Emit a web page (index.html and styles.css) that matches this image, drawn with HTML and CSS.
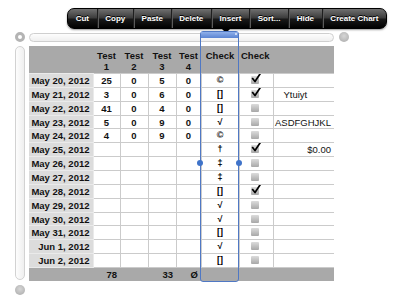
FILE: index.html
```html
<!DOCTYPE html>
<html lang="en">
<head>
    <meta charset="UTF-8">
    <title>Spreadsheet Selection</title>
    <link rel="stylesheet" href="styles.css">
</head>
<body>

<div class="screen">
    <!-- Horizontal scroller -->
    <div class="hscroll">
        <span class="knob ring"></span>
        <span class="htrack"></span>
        <span class="knob"></span>
    </div>

    <div class="main">
        <div class="vside">
            <span class="vtrack"></span>
            <span class="knob"></span>
        </div>

        <table class="grid">
            <colgroup>
                <col style="width:64px">
                <col style="width:27px">
                <col style="width:28px">
                <col style="width:28px">
                <col style="width:25px">
                <col style="width:38px">
                <col style="width:34px">
                <col style="width:61px">
            </colgroup>
            <thead>
                <tr>
                    <th></th>
                    <th>Test<br>1</th>
                    <th>Test<br>2</th>
                    <th>Test<br>3</th>
                    <th>Test<br>4</th>
                    <th>Check</th>
                    <th class="left">Check</th>
                    <th></th>
                </tr>
            </thead>
            <tbody id="rows"></tbody>
            <tfoot>
                <tr>
                    <td></td>
                    <td>78</td>
                    <td></td>
                    <td>33</td>
                    <td>&Oslash;</td>
                    <td></td>
                    <td></td>
                    <td></td>
                </tr>
            </tfoot>
        </table>
    </div>

    <!-- Edit menu over the selected column -->
    <div class="menu">
        <span>Cut</span>
        <span>Copy</span>
        <span>Paste</span>
        <span>Delete</span>
        <span>Insert</span>
        <span>Sort...</span>
        <span>Hide</span>
        <span>Create Chart</span>
    </div>
    <div class="menu-arrow"></div>

    <div class="selection">
        <div class="sel-head"><i></i></div>
        <span class="handle l"></span>
        <span class="handle r"></span>
    </div>
</div>

<script>
    const copy = '\u00a9\ufe0e';
    const data = [
        ['May 20, 2012', '25', '0', '5', '0', copy, true, ''],
        ['May 21, 2012', '3', '0', '6', '0', '[]', true, 'Ytuiyt'],
        ['May 22, 2012', '41', '0', '4', '0', '[]', false, ''],
        ['May 23, 2012', '5', '0', '9', '0', '\u221a', false, 'ASDFGHJKL'],
        ['May 24, 2012', '4', '0', '9', '0', copy, false, ''],
        ['May 25, 2012', '', '', '', '', '\u2020', true, '$0.00'],
        ['May 26, 2012', '', '', '', '', '\u2021', false, ''],
        ['May 27, 2012', '', '', '', '', '\u2021', false, ''],
        ['May 28, 2012', '', '', '', '', '[]', true, ''],
        ['May 29, 2012', '', '', '', '', '\u221a', false, ''],
        ['May 30, 2012', '', '', '', '', '\u221a', false, ''],
        ['May 31, 2012', '', '', '', '', '[]', false, ''],
        ['Jun 1, 2012', '', '', '', '', '\u221a', false, ''],
        ['Jun 2, 2012', '', '', '', '', '[]', false, '']
    ];

    const tick = '<svg class="tick" width="11" height="12" viewBox="0 0 11 12">' +
        '<path d="M1.2 7 L4 10.5 L10.2 1.2" fill="none" stroke="#000" stroke-width="1.7" stroke-linejoin="round"/></svg>';

    const body = document.getElementById('rows');
    data.forEach(function (r) {
        const tr = document.createElement('tr');
        let html = '<td class="date">' + r[0] + '</td>';
        for (let i = 1; i <= 4; i++) html += '<td>' + r[i] + '</td>';
        html += '<td class="sym">' + r[5] + '</td>';
        html += '<td class="box"><span class="cb">' + (r[6] ? tick : '') + '</span></td>';
        let cls = 'txt';
        if (r[7] === 'Ytuiyt') cls += ' indent';
        html += '<td class="' + cls + '">' + r[7] + '</td>';
        tr.innerHTML = html;
        body.appendChild(tr);
    });
</script>

</body>
</html>
```

FILE: styles.css
```css
body {
    margin: 0;
    background-color: #fff;
    font-family: 'Liberation Sans', Arial, sans-serif;
}

.screen {
    position: relative;
    width: 396px;
    height: 300px;
    overflow: hidden;
}

/* scrollers */
.hscroll {
    display: flex;
    align-items: center;
    gap: 4px;
    height: 10px;
    margin-top: 32px;
    padding-left: 15px;
}

.knob {
    display: block;
    width: 10px;
    height: 10px;
    border-radius: 50%;
    background: radial-gradient(circle at 50% 40%, #d6d6d6, #a9a9a9);
    flex: none;
}

.knob.ring {
    box-sizing: border-box;
    border: 3px solid #b4b4b4;
    background: #fff;
}

.hscroll .knob:last-child {
    margin-left: 1px;
}

.htrack {
    display: block;
    box-sizing: border-box;
    width: 305px;
    height: 9px;
    border: 1px solid #cfcfcf;
    border-radius: 5px;
    background: linear-gradient(#fdfdfd, #efefef);
}

.main {
    display: flex;
    align-items: flex-start;
    gap: 4px;
    margin-top: 4px;
    padding-left: 15px;
}

.vside {
    display: flex;
    flex-direction: column;
    gap: 5px;
}

.vtrack {
    display: block;
    box-sizing: border-box;
    width: 10px;
    height: 234px;
    border: 1px solid #d2d2d2;
    border-radius: 5px;
    background: linear-gradient(90deg, #fdfdfd, #efefef);
}

/* table */
.grid {
    width: 305px;
    table-layout: fixed;
    border-collapse: collapse;
    font-size: 9.5px;
    font-weight: bold;
    color: #111;
}

.grid th {
    height: 23px;
    padding: 4px 0 0;
    vertical-align: top;
    line-height: 11px;
    background-color: #a9a9a9;
    text-align: center;
}

.grid th.left {
    text-align: left;
    padding-left: 2px;
}

.grid tbody td {
    height: 12.86px;
    padding: 0;
    text-align: center;
    border: 1px solid #cbcbcb;
    line-height: 11px;
    white-space: nowrap;
    overflow: hidden;
}

.grid tbody td:first-child {
    border-left: none;
}

.grid td.date {
    text-align: right;
    padding-right: 3px;
    background-color: #dcdcdc;
    border-color: #eaeaea;
}

.grid td.sym {
    font-size: 9px;
    color: #000;
}

.grid td.txt {
    font-weight: normal;
    text-align: right;
    padding-right: 3px;
    border-right: none;
}

.grid td.txt.indent {
    text-align: left;
    padding-left: 10px;
}

.grid td.box {
    text-align: left;
    padding-left: 11px;
}

.cb {
    position: relative;
    display: inline-block;
    width: 8px;
    height: 8px;
    margin-top: 1px;
    vertical-align: top;
    border-radius: 1px;
    background: linear-gradient(#dcdcdc, #a8a8a8);
}

.tick {
    position: absolute;
    left: 0;
    top: -5px;
}

.grid tfoot td {
    height: 13px;
    padding: 0 3px 0 0;
    text-align: right;
    background-color: #a9a9a9;
    line-height: 12px;
}

/* popup edit menu */
.menu {
    position: absolute;
    left: 67px;
    top: 8px;
    width: 320px;
    height: 21px;
    box-sizing: border-box;
    display: flex;
    border: 1px solid #000;
    border-radius: 7px;
    background: linear-gradient(#707070, #3a3a3a 48%, #1a1a1a 52%, #000);
    box-shadow: 0 1px 2px rgba(0, 0, 0, 0.4);
    overflow: hidden;
}

.menu span {
    flex: auto;
    display: flex;
    align-items: center;
    justify-content: center;
    color: #fff;
    font-size: 8px;
    font-weight: bold;
    text-shadow: 0 -1px 0 #000;
    border-left: 1px solid #1e1e1e;
    box-shadow: inset 1px 0 0 #5a5a5a;
}

.menu span:first-child {
    border-left: none;
    box-shadow: none;
}

.menu-arrow {
    position: absolute;
    left: 221px;
    top: 28px;
    width: 0;
    height: 0;
    border-left: 5px solid transparent;
    border-right: 5px solid transparent;
    border-top: 5px solid #000;
}

/* selected column */
.selection {
    position: absolute;
    left: 200px;
    top: 31px;
    width: 39px;
    height: 251px;
    box-sizing: border-box;
    border: 1.5px solid #4f78c4;
    border-radius: 3px;
}

.sel-head {
    position: relative;
    height: 6px;
    background: linear-gradient(#8fb0ea, #5a84d2);
}

.sel-head i {
    position: absolute;
    right: 1px;
    top: 1px;
    width: 2px;
    height: 2px;
    background: #c9d8f5;
}

.handle {
    position: absolute;
    top: 128px;
    width: 6px;
    height: 6px;
    border-radius: 50%;
    background: #3f73c9;
}

.handle.l {
    left: -4px;
}

.handle.r {
    right: -4px;
}
```
